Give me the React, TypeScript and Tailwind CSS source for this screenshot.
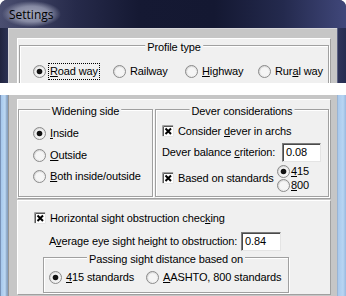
import type { ReactNode } from 'react';

function Radio({ checked }: { checked?: boolean }) {
  return (
    <svg width="13" height="13" viewBox="0 0 13 13" className="shrink-0">
      <defs>
        <linearGradient id="radioFill" x1="0" y1="0" x2="1" y2="1">
          <stop offset="0" stopColor="#cfcfcf" />
          <stop offset="1" stopColor="#fdfdfd" />
        </linearGradient>
      </defs>
      <circle cx="6.5" cy="6.5" r="6" fill="url(#radioFill)" stroke="#8a8a8a" />
      <circle cx="6.5" cy="6.5" r="4.3" fill="#f5f5f5" />
      {checked && <circle cx="6.5" cy="6.5" r="2.8" fill="#111" />}
    </svg>
  );
}

function Check() {
  return (
    <svg width="12" height="12" viewBox="0 0 12 12" className="shrink-0">
      <rect x="0" y="0" width="12" height="12" fill="#fff" />
      <path d="M0.5 12V0.5H12" stroke="#a0a0a0" fill="none" />
      <path d="M1.5 11V1.5H11" stroke="#585858" fill="none" />
      <path d="M11.5 0V11.5H0" stroke="#e6e6e6" fill="none" />
      <path d="M3.5 3.5L9 9M9 3.5L3.5 9" stroke="#000" strokeWidth="2" />
    </svg>
  );
}

function RadioItem({
  checked,
  focus,
  tight,
  className = '',
  children,
}: {
  checked?: boolean;
  focus?: boolean;
  tight?: boolean;
  className?: string;
  children: ReactNode;
}) {
  return (
    <div className={`flex items-center ${className}`}>
      <Radio checked={checked} />
      {tight ? (
        <span className="ml-[1px] whitespace-nowrap">{children}</span>
      ) : (
        <span
          className={`ml-[2px] whitespace-nowrap border border-dotted px-[1px] py-[1px] ${
            focus ? 'border-black' : 'border-transparent'
          }`}
        >
          {children}
        </span>
      )}
    </div>
  );
}

function CheckItem({ children }: { children: ReactNode }) {
  return (
    <div className="flex items-center">
      <Check />
      <span className="ml-[4px] whitespace-nowrap">{children}</span>
    </div>
  );
}

function Panel({ className = '', children }: { className?: string; children?: ReactNode }) {
  return (
    <div
      className={`w-[314px] border border-t-white border-l-white border-r-[#a0a0a0] border-b-[#a0a0a0] bg-[#f0f0f0] ${className}`}
    >
      {children}
    </div>
  );
}

function Group({ title, className = '', children }: { title: string; className?: string; children?: ReactNode }) {
  return (
    <div
      className={`relative shrink-0 border border-[#a0a0a0] shadow-[inset_1px_1px_0_#fff,1px_1px_0_#fff] ${className}`}
    >
      <span className="absolute left-1/2 top-[-5px] -translate-x-1/2 whitespace-nowrap bg-[#f0f0f0] px-[2px]">
        {title}
      </span>
      {children}
    </div>
  );
}

function Edit({ value, className = '' }: { value: string; className?: string }) {
  return (
    <div
      className={`flex h-[19px] shrink-0 items-center border border-t-[#7c7c7c] border-l-[#7c7c7c] border-r-[#e4e4e4] border-b-[#e4e4e4] bg-white pl-[3px] shadow-[inset_1px_1px_0_#4a4a4a] ${className}`}
    >
      {value}
    </div>
  );
}

export default function App() {
  return (
    <div className="h-[296px] w-[346px] overflow-hidden bg-white font-['Liberation_Sans',Arial,sans-serif] text-[11px] leading-[13px] tracking-[-0.12px] text-black">
      {/* title bar and profile type, cut off below */}
      <div className="flex h-[83px] flex-col overflow-hidden rounded-t-[7px] bg-[#1c2140]">
        <div className="flex h-[28px] shrink-0 items-center bg-[linear-gradient(90deg,#4a4e70_0%,#262a4a_22%,#151933_40%,#141832_62%,#242a4e_82%,#40477a_100%)]">
          <span className="ml-[2px] flex h-[26px] items-center rounded-[13px] bg-[radial-gradient(closest-side,#a3a6ba,#868aa3_60%,rgba(100,104,135,0))] px-[7px] font-['Open_Sans',sans-serif] text-[12px] tracking-normal">
            Settings
          </span>
        </div>
        <div className="flex flex-1">
          <div className="w-[8px] bg-[linear-gradient(90deg,#20243f,#2c3254)]" />
          <div className="w-[329px] border-l border-t border-[#d6d6da] bg-[#c6c6c6] pl-[8px] pt-[9px]">
            <Panel className="h-[80px]">
              <Group title="Profile type" className="ml-[1px] mt-[6px] h-[60px] w-[310px]">
                <div className="mt-[16px] flex h-[18px] items-center pl-[13px]">
                  <RadioItem checked focus className="w-[80px]">
                    <u>R</u>oad way
                  </RadioItem>
                  <RadioItem className="w-[72px]">Railway</RadioItem>
                  <RadioItem className="w-[73px]">
                    <u>H</u>ighway
                  </RadioItem>
                  <RadioItem>
                    Rur<u>a</u>l way
                  </RadioItem>
                </div>
              </Group>
            </Panel>
          </div>
          <div className="w-[9px] bg-[linear-gradient(90deg,#8c92ae_0px,#2e345a_1px,#262c50_9px)]" />
        </div>
      </div>

      <div className="h-[12px] bg-white" />

      {/* lower part of the dialog */}
      <div className="flex h-[201px]">
        <div className="w-[8px] bg-[linear-gradient(90deg,#4d5f86_0px,#a5c7ec_1px,#bcd8f3_5px,#88a2c2_7px)]" />
        <div className="w-[329px] border-l border-[#959595] bg-[#c6c6c6] pl-[8px] pt-[4px]">
          <Panel className="flex h-[100px]">
            <Group title="Widening side" className="mt-[9px] h-[88px] w-[135px]">
              <div className="flex flex-col pl-[14px] pt-[12px]">
                <RadioItem checked className="h-[22px]">
                  <u>I</u>nside
                </RadioItem>
                <RadioItem className="h-[22px]">
                  <u>O</u>utside
                </RadioItem>
                <RadioItem className="h-[21px]">
                  <u>B</u>oth inside/outside
                </RadioItem>
              </div>
            </Group>
            <Group title="Dever considerations" className="ml-[2px] mt-[9px] h-[88px] w-[174px]">
              <div className="flex flex-col pl-[6px]">
                <div className="mt-[13px] flex h-[16px] items-center">
                  <CheckItem>
                    Consider <u>d</u>ever in archs
                  </CheckItem>
                </div>
                <div className="mt-[4px] flex h-[19px] items-center">
                  <span className="whitespace-nowrap">
                    Dever balance <u>c</u>riterion:
                  </span>
                  <Edit value="0.08" className="ml-auto mr-[7px] w-[39px]" />
                </div>
                <div className="mt-[2px] flex h-[28px] items-center">
                  <div className="w-[115px]">
                    <CheckItem>Based on standards</CheckItem>
                  </div>
                  <div className="flex flex-col">
                    <RadioItem checked tight className="h-[14px]">
                      <u>4</u>15
                    </RadioItem>
                    <RadioItem tight className="h-[14px]">
                      <u>8</u>00
                    </RadioItem>
                  </div>
                </div>
              </div>
            </Group>
          </Panel>

          <Panel className="mt-[1px] h-[95px]">
            <div className="mt-[9px] flex h-[16px] items-center pl-[16px]">
              <CheckItem>
                Horizontal sight obstruction chec<u>k</u>ing
              </CheckItem>
            </div>
            <div className="mt-[6px] flex h-[19px] items-center pl-[31px]">
              <span className="w-[192px] whitespace-nowrap">
                A<u>v</u>erage eye sight height to obstruction:
              </span>
              <Edit value="0.84" className="w-[40px]" />
            </div>
            <Group title="Passing sight distance based on" className="ml-[25px] mt-[6px] h-[36px] w-[246px]">
              <div className="mt-[10px] flex h-[18px] items-center pl-[5px]">
                <RadioItem checked className="w-[97px]">
                  <u>4</u>15 standards
                </RadioItem>
                <RadioItem>
                  <u>A</u>ASHTO, 800 standards
                </RadioItem>
              </div>
            </Group>
          </Panel>
        </div>
        <div className="w-[9px] bg-[linear-gradient(90deg,#8aa0bc_0px,#a8c8ec_1px,#b8d5f2_6px,#98b8de_9px)]" />
      </div>
    </div>
  );
}
